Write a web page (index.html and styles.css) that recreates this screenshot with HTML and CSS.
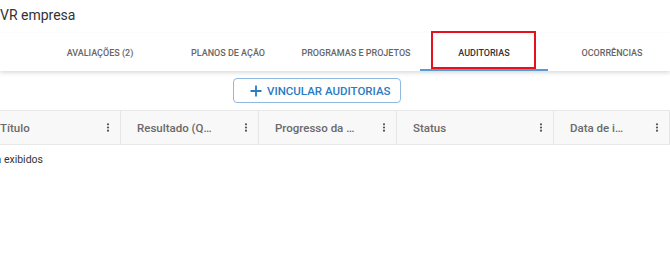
FILE: index.html
```html
<!DOCTYPE html>
<html lang="pt-BR">
<head>
<meta charset="utf-8">
<title>VR empresa</title>
<link rel="stylesheet" href="styles.css">
</head>
<body>
<div class="page">
  <h1 class="title">VR empresa</h1>
  <nav class="tabbar">
    <div class="tab">AVALIAÇÕES (2)</div>
    <div class="tab">PLANOS DE AÇÃO</div>
    <div class="tab">PROGRAMAS E PROJETOS</div>
    <div class="tab active">AUDITORIAS<span class="highlight"></span></div>
    <div class="tab">OCORRÊNCIAS</div>
  </nav>
  <div class="toolbar">
    <button class="btn-outline" type="button">
      <svg class="plus" width="12" height="12" viewBox="0 0 12 12" aria-hidden="true"><path d="M6 0.5v11M0.5 6h11" stroke="currentColor" stroke-width="1.8" fill="none"/></svg>
      <span>VINCULAR AUDITORIAS</span>
    </button>
  </div>
  <div class="table">
    <div class="thead">
      <div class="th"><span>Título</span><svg class="kebab" width="4" height="9" viewBox="0 0 4 9"><circle cx="2" cy="1.3" r="1.1"/><circle cx="2" cy="4.5" r="1.1"/><circle cx="2" cy="7.7" r="1.1"/></svg></div>
      <div class="th"><span>Resultado (Q…</span><svg class="kebab" width="4" height="9" viewBox="0 0 4 9"><circle cx="2" cy="1.3" r="1.1"/><circle cx="2" cy="4.5" r="1.1"/><circle cx="2" cy="7.7" r="1.1"/></svg></div>
      <div class="th"><span>Progresso da …</span><svg class="kebab" width="4" height="9" viewBox="0 0 4 9"><circle cx="2" cy="1.3" r="1.1"/><circle cx="2" cy="4.5" r="1.1"/><circle cx="2" cy="7.7" r="1.1"/></svg></div>
      <div class="th"><span>Status</span><svg class="kebab" width="4" height="9" viewBox="0 0 4 9"><circle cx="2" cy="1.3" r="1.1"/><circle cx="2" cy="4.5" r="1.1"/><circle cx="2" cy="7.7" r="1.1"/></svg></div>
      <div class="th"><span>Data de i…</span><svg class="kebab" width="4" height="9" viewBox="0 0 4 9"><circle cx="2" cy="1.3" r="1.1"/><circle cx="2" cy="4.5" r="1.1"/><circle cx="2" cy="7.7" r="1.1"/></svg></div>
    </div>
    <div class="empty"><span>Nenhuma auditoria para exibidos</span></div>
  </div>
</div>
</body>
</html>
```
FILE: styles.css
```css
* { box-sizing: border-box; }
html, body { margin: 0; padding: 0; background: #fff; }
body {
  font-family: Roboto, "Liberation Sans", Arial, sans-serif;
  color: #333;
  overflow: hidden;
  width: 670px;
  height: 277px;
}
.page { width: 670px; }
.title {
  margin: 0;
  padding-top: 5px;
  height: 33px;
  font-size: 14px;
  line-height: 20px;
  font-weight: 400;
  color: #333;
}
.tabbar {
  display: flex;
  padding-left: 36px;
  height: 38px;
  box-shadow: 0 2px 4px rgba(0,0,0,0.14);
  position: relative;
}
.tab {
  position: relative;
  flex: 0 0 128px;
  display: flex;
  align-items: center;
  justify-content: center;
  padding-top: 2px;
  font-size: 9px;
  font-weight: 500;
  color: #666;
  white-space: nowrap;
}
.tab.active {
  color: #333;
  border-bottom: 2px solid #5a9ad4;
  padding-top: 4px;
}
.highlight {
  position: absolute;
  left: 11px;
  top: -2px;
  width: 105px;
  height: 38px;
  border: 2px solid #e8101a;
}
.toolbar {
  display: flex;
  padding-left: 233px;
  margin-top: 7px;
}
.btn-outline {
  display: flex;
  align-items: center;
  gap: 5px;
  width: 168px;
  height: 25px;
  padding: 0 0 0 16px;
  border: 1px solid #8db9e2;
  border-radius: 4px;
  background: #fff;
  color: #2b7bc1;
  font-family: Roboto, "Liberation Sans", Arial, sans-serif;
  font-size: 11.5px;
  font-weight: 500;
  white-space: nowrap;
}
.plus { flex: 0 0 auto; }
.table {
  margin-top: 7px;
  margin-left: -16px;
  width: 686px;
}
.thead {
  display: grid;
  grid-template-columns: 137px 138px 138px 157px 1fr;
  height: 35px;
  background: #f8f8f8;
  border-top: 1px solid #e8e8e8;
  border-bottom: 1px solid #e8e8e8;
}
.th {
  display: flex;
  align-items: center;
  justify-content: space-between;
  padding: 0 10px 0 16px;
  border-right: 1px solid #e6e6e6;
  font-size: 11.5px;
  font-weight: 500;
  color: #6a6a6a;
  white-space: nowrap;
}
.kebab { fill: #555; flex: 0 0 auto; }
.empty {
  display: flex;
  justify-content: flex-end;
  width: 59px;
  height: 28px;
  align-items: center;
  font-size: 10.5px;
  color: #333;
  white-space: nowrap;
}
```
